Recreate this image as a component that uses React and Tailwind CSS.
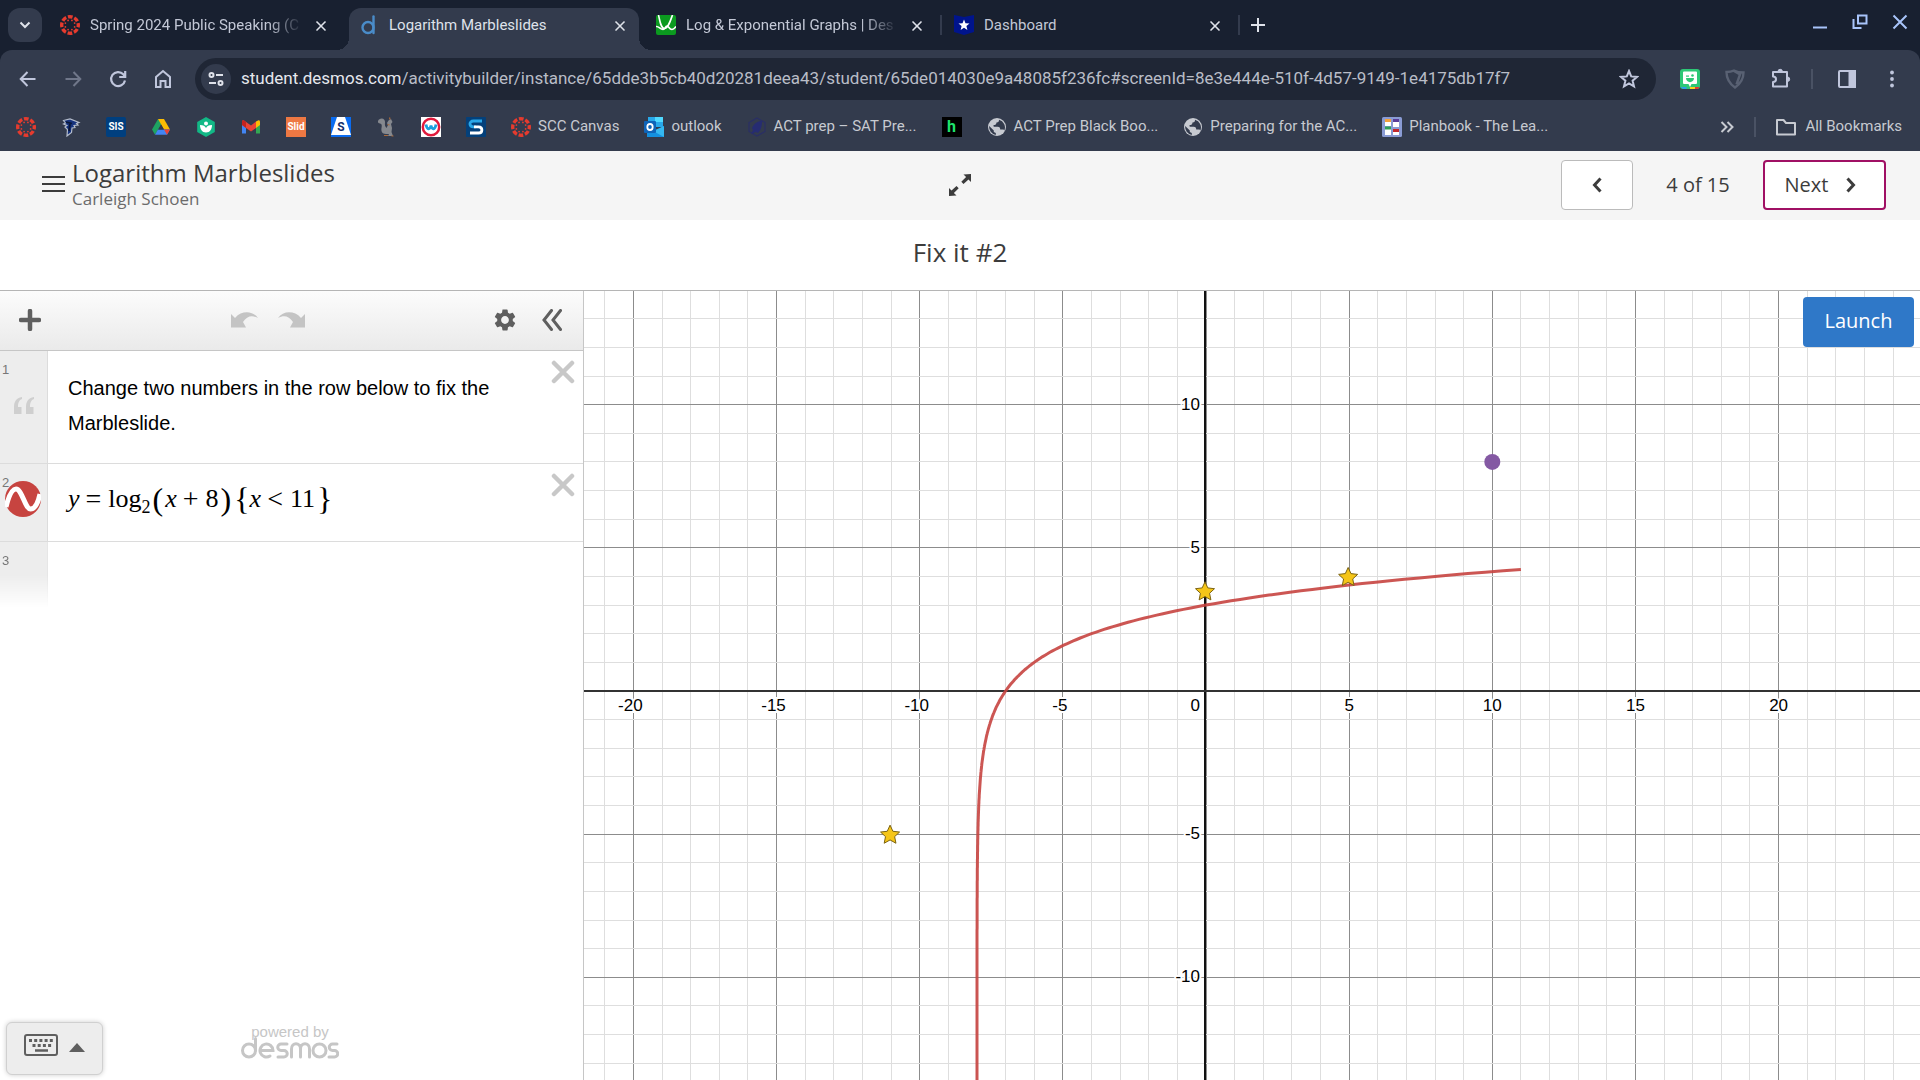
import React from "react";
import { FiX } from "react-icons/fi";
import { MdSettings } from "react-icons/md";

const UNIT = 28.63;
const ORIGIN = { x: 622, y: 400 };
const CURVE_COLOR = "#c74440";

const px = x => ORIGIN.x + x * UNIT;
const py = y => ORIGIN.y - y * UNIT;

const range = (from, to) => Array.from({ length: to - from + 1 }, (_, i) => from + i);

/* ---------- small drawings ---------- */

function CanvasIcon() {
  return (
    <svg viewBox="0 0 20 20" className="size-5 shrink-0" aria-hidden="true">
      <circle cx="10" cy="10" r="8.3" fill="none" stroke="#e63b2e" strokeWidth="3.400" strokeDasharray="4.700 1.819" strokeDashoffset="2.350" />
      {range(0, 7).map(i => {
        const a = (i * Math.PI) / 4 + Math.PI / 8;
        return <circle key={i} cx={10 + 5 * Math.cos(a)} cy={10 + 5 * Math.sin(a)} r="0.9" fill="#e63b2e" />;
      })}
    </svg>
  );
}

function DesmosIcon() {
  return (
    <svg viewBox="0 0 20 20" className="size-5 shrink-0" fill="none" stroke="#4a8cc9" strokeWidth="2.4" strokeLinecap="round" aria-hidden="true">
      <circle cx="9" cy="12.5" r="5.5" />
      <path d="M14.500 1.5v16.5" />
    </svg>
  );
}

function DesmosGraphIcon() {
  return (
    <svg viewBox="0 0 20 20" className="size-5 shrink-0" aria-hidden="true">
      <rect width="20" height="20" rx="2" fill="#0b9a1f" />
      <path d="M2.500 0C4 7 5 13.500 8.500 13.500S14 7 16.500 0M0 11.500c3-.5 4 3 7 3 2.500 0 2-3.500 4-3.500s2 3.500 5 3.500c2 0 3-1.500 4-3" fill="none" stroke="#fff" strokeWidth="1.6" />
    </svg>
  );
}

function BadgeIcon() {
  return (
    <svg viewBox="0 0 20 20" className="size-5 shrink-0" aria-hidden="true">
      <path d="M0 0l10 2L20 0v17l-10 3-10-3z" fill="#00148c" />
      <path d="M10 4.500l1.500 3.800 4 .2-3.100 2.500 1 4L10 12.800 6.600 15l1-4L4.500 8.500l4-.2z" fill="#fff" />
    </svg>
  );
}

function FalconIcon() {
  return (
    <svg viewBox="0 0 20 20" className="size-5 shrink-0" aria-hidden="true">
      <path d="M2.500 3.500L9 2l9 3.500-2.500 1L17 8l-4 .5 1 2-3 .5-.5 4.500L6 19l.5-6.500L4 10l2-1.500L2.500 7l2-1z" fill="#16337d" stroke="#b4bccb" strokeWidth="1.200" />
      <path d="M5 5l6 1.500M9 7l-1 7" stroke="#0a1738" strokeWidth="1.800" />
    </svg>
  );
}

function TextIcon({ text, className }) {
  return (
    <span className={`flex size-5 shrink-0 items-center justify-center overflow-hidden font-bold leading-none ${className}`}>
      {text}
    </span>
  );
}

function DriveIcon() {
  return (
    <svg viewBox="0 0 20 20" className="size-5 shrink-0" aria-hidden="true">
      <path d="M7 2L1 12.500l3 5.200L10.500 7z" fill="#1ea362" />
      <path d="M7 2h6l6 10.500h-6z" fill="#fbbc04" />
      <path d="M4 17.700l3-5.200h12l-3 5.200z" fill="#4285f4" />
      <path d="M19 12.500h-6l3 5.200z" fill="#ea4335" />
      <path d="M10 7.500L7.200 12.500h5.700z" fill="#333b4d" />
    </svg>
  );
}

function HexLeafIcon() {
  return (
    <svg viewBox="0 0 20 20" className="size-5 shrink-0" aria-hidden="true">
      <path d="M10 0l8.800 5v10L10 20l-8.800-5V5z" fill="#12b886" />
      <circle cx="10" cy="6.500" r="2" fill="#fff" />
      <path d="M4 8c3.500 0 5 1 6 3 1-2 2.500-3 6-3 0 4-2 7.500-6 7.500S4 12 4 8z" fill="#fff" />
    </svg>
  );
}

function GmailIcon() {
  return (
    <svg viewBox="0 0 20 20" className="size-5 shrink-0" aria-hidden="true">
      <path d="M1 5v11.500h4V8z" fill="#4285f4" />
      <path d="M19 5v11.500h-4V8z" fill="#34a853" />
      <path d="M15 4.500l2-1c1-.5 2 0 2 1.500v3l-4 3z" fill="#fbbc04" />
      <path d="M1 8V5c0-1.500 1-2 2-1.500l7 5 5-4V11l-5 3.500L5 11z" fill="#ea4335" />
      <path d="M1 8V5c0-1.500 1-2 2-1.500l2 1.500v6z" fill="#c5221f" />
    </svg>
  );
}

function TriangleSIcon() {
  return (
    <svg viewBox="0 0 20 20" className="size-5 shrink-0" aria-hidden="true">
      <rect width="20" height="20" fill="#0b6cf0" />
      <path d="M6 0h8l6 18H0z" fill="#fff" />
      <text x="10" y="14" textAnchor="middle" fontSize="12" fontWeight="700" fill="#14306e" fontFamily="Roboto, sans-serif">S</text>
    </svg>
  );
}

function SquirrelIcon() {
  return (
    <svg viewBox="0 0 20 20" className="size-5 shrink-0" aria-hidden="true">
      <path d="M3 2.500C6 0 9.500 2 9 5.500 8.700 8 9 9.500 10.500 11L12 8l-1-2 1.500-2.500L15 2l1.500 3L15 7l1 4-.5 4 1.500 4h-5l1-2-3 0C6 17 5 14 5.500 11 6 8.500 6 7 4 6.500 1.500 6 1.500 4 3 2.500z" fill="#85888e" />
      <path d="M13.500 0.500l.5 2M11.500 7.500l2 .5M8 18.500h4M15.500 19h2" stroke="#a8693a" strokeWidth="1.200" />
    </svg>
  );
}

function OwlIcon() {
  return (
    <svg viewBox="0 0 20 20" className="size-5 shrink-0" aria-hidden="true">
      <rect width="20" height="20" fill="#fff" />
      <circle cx="10" cy="10" r="8.200" fill="#fff" stroke="#e01a3c" strokeWidth="2.500" />
      <path d="M5 7.500c1 5.500 4 5.500 5 1 1 4.500 4 4.500 5-1" fill="none" stroke="#1aa0dc" strokeWidth="2.800" />
    </svg>
  );
}

function WaveSIcon() {
  return (
    <svg viewBox="0 0 20 20" className="size-5 shrink-0" aria-hidden="true">
      <rect width="20" height="20" rx="1" fill="#04407a" />
      <path d="M16 4H7.500C2.500 4 3 9.800 7.500 9.800H10" fill="none" stroke="#2aa7e8" strokeWidth="2.800" />
      <path d="M8 9.800h4.500c4.500 0 4.500 6.200 0 6.200H4" fill="none" stroke="#fff" strokeWidth="2.800" />
    </svg>
  );
}

function OutlookIcon() {
  return (
    <svg viewBox="0 0 20 20" className="size-5 shrink-0" aria-hidden="true">
      <path d="M4 0h15v10H4z" fill="#28a8ea" />
      <path d="M11 0h8v5h-8z" fill="#50d9ff" />
      <path d="M3 9l9 5 8-5v11H3z" fill="#1490df" />
      <path d="M20 9v11L9 14z" fill="#35b8f1" />
      <rect x="0" y="4" width="12" height="12" rx="1" fill="#0f64b8" />
      <ellipse cx="6" cy="10" rx="2.700" ry="3" fill="none" stroke="#fff" strokeWidth="1.800" />
    </svg>
  );
}

function RocketHexIcon() {
  return (
    <svg viewBox="0 0 20 20" className="size-5 shrink-0" aria-hidden="true">
      <path d="M10 1l8 4.500v9L10 19l-8-4.500v-9z" fill="none" stroke="#2a2f66" strokeWidth="1.200" />
      <path d="M15 4c-5 0-8 3-10 7l1 2-2 4 5-2 2 1c3-3 4-7 4-12z" fill="#262c72" />
    </svg>
  );
}

function GlobeIcon() {
  return (
    <svg viewBox="0 0 20 20" className="size-5 shrink-0" aria-hidden="true">
      <circle cx="10" cy="10" r="9" fill="#c7cad1" />
      <path d="M12 2.800c0 2-.5 2.400-2.500 2.600-.3 2-.8 2.400-3 2.600l.2 1.800h4c2 .2 2.500 1.200 2.500 2.700h2.500c1 0 1.400.6 1.600 1.200A8 8 0 0 0 12 2.800zM2.200 9l4.600 4.500v1.500l2 1v1.900A8 8 0 0 1 2.200 9z" fill="#333b4d" />
    </svg>
  );
}

function PlanbookIcon() {
  return (
    <svg viewBox="0 0 20 20" className="size-5 shrink-0" aria-hidden="true">
      <rect width="20" height="20" rx="1.500" fill="#8a9bd4" />
      <g fill="#fff">
        <rect x="3" y="3" width="6" height="6" />
        <rect x="11" y="3" width="6" height="7" />
        <rect x="3" y="11" width="6" height="7" />
        <rect x="11" y="12" width="6" height="6" />
      </g>
      <path d="M3 2h6v3H3z" fill="#f2a13c" />
      <path d="M11 2h6v3h-6z" fill="#5a3c99" />
      <path d="M3 9.500h6v3H3z" fill="#2f9e55" />
      <path d="M11 12h6v3h-6z" fill="#c3272b" />
    </svg>
  );
}

/* ---------- browser chrome ---------- */

const TABS = [
  { title: "Spring 2024 Public Speaking (C", icon: <CanvasIcon />, fade: true },
  { title: "Logarithm Marbleslides", icon: <DesmosIcon />, active: true },
  { title: "Log & Exponential Graphs | Des", icon: <DesmosGraphIcon />, fade: true },
  { title: "Dashboard", icon: <BadgeIcon /> },
];

function Tab({ tab, last }) {
  return (
    <div
      className={`relative flex h-full items-center ${
        tab.active
          ? "mx-1 w-[290px] rounded-t-xl bg-[#333b4d] pr-[11px] pl-[10px] before:absolute before:bottom-0 before:-left-3 before:size-3 before:bg-[radial-gradient(circle_at_0_0,transparent_12px,#333b4d_12px)] after:absolute after:-right-3 after:bottom-0 after:size-3 after:bg-[radial-gradient(circle_at_100%_0,transparent_12px,#333b4d_12px)]"
          : "w-[298px] pr-4 pl-[13px]"
      }`}
    >
      <div className="flex min-w-0 flex-1 items-center gap-[10px] pb-2">
        {tab.icon}
        <span
          className={`text-[15px] whitespace-nowrap ${tab.active ? "text-[#dfe2ea]" : "text-[#c3c8d6]"} ${
            tab.fade ? "[mask-image:linear-gradient(to_right,black_85%,transparent_102%)]" : ""
          }`}
        >
          {tab.title}
        </span>
      </div>
      <button aria-label={`Close ${tab.title}`} className="mb-[6px] text-[#dfe2ea]">
        <FiX className="size-4" strokeWidth="2.500" />
      </button>
      {last && <span className="absolute top-[7px] right-[-1px] h-5 w-[2px] bg-[#333b4d]" />}
    </div>
  );
}

function TabBar() {
  return (
    <div className="flex h-[50px] items-start pl-2">
      <button aria-label="Search tabs" className="mt-2 flex h-[34px] w-[34px] items-center justify-center rounded-xl bg-[#333b4d] text-[#dfe2ea]">
        <svg viewBox="0 0 12 12" className="size-3" fill="none" stroke="currentColor" strokeWidth="2"><path d="M1.500 3.500L6 8l4.500-4.500" /></svg>
      </button>
      <div className="flex h-full pt-2 pl-[5px]">
        {TABS.map((t, i) => <Tab key={t.title} tab={t} last={i > 1} />)}
      </div>
      <button aria-label="New tab" className="mt-[18px] ml-3 text-[#dfe2ea]">
        <svg viewBox="0 0 14 14" className="size-[14px]" stroke="currentColor" strokeWidth="2"><path d="M7 0v14M0 7h14" /></svg>
      </button>
      <div className="ml-auto flex gap-6 pt-[14px] pr-3 text-[#a8c4fa]">
        <button aria-label="Minimize">
          <svg viewBox="0 0 16 16" className="size-4" stroke="currentColor" strokeWidth="2"><path d="M1 13.500h14" /></svg>
        </button>
        <button aria-label="Restore">
          <svg viewBox="0 0 16 16" className="size-4" fill="none" stroke="currentColor" strokeWidth="2"><path d="M6 1.500h8.500v8H6zM1.500 5v9h8" /></svg>
        </button>
        <button aria-label="Close window">
          <svg viewBox="0 0 16 16" className="size-4" stroke="currentColor" strokeWidth="2"><path d="M1.500 1.500l13 13M14.500 1.500l-13 13" /></svg>
        </button>
      </div>
    </div>
  );
}

function AddressBar() {
  return (
    <div className="flex h-[58px] items-center px-[18px] text-[#c0c6dc]">
      <div className="flex items-center gap-[25px]">
        <button aria-label="Back">
          <svg viewBox="0 0 20 20" className="size-5" fill="none" stroke="currentColor" strokeWidth="2"><path d="M17.500 10H3M9.500 3L2.700 10l6.800 7" /></svg>
        </button>
        <button aria-label="Forward" className="text-[#70778a]">
          <svg viewBox="0 0 20 20" className="size-5" fill="none" stroke="currentColor" strokeWidth="2"><path d="M2.500 10H17M10.500 3l6.800 7-6.800 7" /></svg>
        </button>
        <button aria-label="Reload">
          <svg viewBox="0 0 20 20" className="size-5" fill="none" stroke="currentColor" strokeWidth="2.200"><path d="M17 11.500A7 7 0 1 1 15.300 5.300L17 7.500M17.200 2v6h-6" /></svg>
        </button>
        <button aria-label="Home">
          <svg viewBox="0 0 20 20" className="size-5" fill="none" stroke="currentColor" strokeWidth="2"><path d="M3 8l7-6 7 6v10h-4.500v-6h-5v6H3z" /></svg>
        </button>
      </div>
      <div className="ml-[22px] flex h-[42px] min-w-0 flex-1 items-center rounded-full bg-[#1f2635] pr-[17px] pl-[6px]">
        <button aria-label="View site information" className="flex size-[30px] shrink-0 items-center justify-center rounded-full bg-[#333b4d] text-[#dfe2ea]">
          <svg viewBox="0 0 16 16" className="size-4" fill="none" stroke="currentColor" strokeWidth="2"><circle cx="3.500" cy="4" r="2" /><path d="M8 4h7M1 12h7" /><circle cx="12.500" cy="12" r="2" /></svg>
        </button>
        <div className="ml-[10px] flex-1 overflow-hidden text-[17px] whitespace-nowrap text-[#b9bdc7]">
          <span className="text-[#e6e8ee]">student.desmos.com</span>
          /activitybuilder/instance/65dde3b5cb40d20281deea43/student/65de014030e9a48085f236fc#screenId=8e3e444e-510f-4d57-9149-1e4175db17f7
        </div>
        <button aria-label="Bookmark this tab">
          <svg viewBox="0 0 20 20" className="size-5" fill="none" stroke="currentColor" strokeWidth="2"><path d="M10 2l2.200 5.400 5.800.5-4.400 3.800 1.400 5.700L10 14.400 5 17.400l1.400-5.700L2 7.900l5.800-.5z" /></svg>
        </button>
      </div>
      <div className="ml-6 flex items-center gap-[25px]">
        <button aria-label="Bitmoji">
          <svg viewBox="0 0 20 20" className="size-5">
            <rect width="20" height="20" rx="3" fill="#2dc776" />
            <path d="M0.500 18h6v2H3z" fill="#2b9de9" /><path d="M10 18h5v2h-5z" fill="#f6d320" /><path d="M15 18h4.500L18 20h-3z" fill="#e8352e" />
            <path d="M4 2.500h12a1 1 0 0 1 1 1V14a1 1 0 0 1-1 1h-4.500L10 18l-1.500-3H4a1 1 0 0 1-1-1V3.500a1 1 0 0 1 1-1z" fill="#fff" />
            <path d="M6 6.500h3v1.200H6z" fill="#2dc776" /><circle cx="12.500" cy="6.500" r="1.300" fill="#2dc776" /><path d="M6 9h8c0 5.500-8 5.500-8 0z" fill="#2dc776" />
          </svg>
        </button>
        <button aria-label="Shield extension" className="text-[#596173]">
          <svg viewBox="0 0 20 20" className="size-5" fill="none" stroke="currentColor" strokeWidth="2.400"><path d="M1.500 3C4 3 7 2.500 9 1.500c3 1.500 6 2 9.500 2C18.500 10 15 15 10 18.500 5 15 1.500 9.500 1.500 3zM9 2l6 3.500-3.500 10" /></svg>
        </button>
        <button aria-label="Extensions">
          <svg viewBox="0 0 22 22" className="size-[22px]" fill="none" stroke="currentColor" strokeWidth="2"><path d="M3 4h14v14.500H3V14c4 0 4-5.500 0-5.500z" strokeLinejoin="round" /><path d="M8 3.500a2.200 2.200 0 0 1 4.400 0zM17.500 9a2.200 2.200 0 0 1 0 4.400z" fill="currentColor" stroke="currentColor" strokeWidth="1" /></svg>
        </button>
      </div>
      <span className="mr-6 ml-[19px] h-5 w-[2px] bg-[#4a5264]" />
      <div className="flex items-center gap-[25px]">
        <button aria-label="Side panel">
          <svg viewBox="0 0 20 20" className="size-5" fill="none" stroke="currentColor" strokeWidth="2"><rect x="2" y="2" width="16" height="16" rx="1" /><path d="M12.500 2H18v16h-5.500z" fill="currentColor" /></svg>
        </button>
        <button aria-label="Menu">
          <svg viewBox="0 0 20 20" className="size-5" fill="currentColor"><circle cx="10" cy="3.500" r="1.900" /><circle cx="10" cy="10" r="1.900" /><circle cx="10" cy="16.500" r="1.900" /></svg>
        </button>
      </div>
    </div>
  );
}

const ICON_BOOKMARKS = [
  { name: "Canvas", icon: <CanvasIcon /> },
  { name: "Falcons", icon: <FalconIcon /> },
  { name: "SIS", icon: <TextIcon text="SIS" className="rounded-xs bg-[#003f7f] text-[10px] text-white" /> },
  { name: "Drive", icon: <DriveIcon /> },
  { name: "Hapara", icon: <HexLeafIcon /> },
  { name: "Gmail", icon: <GmailIcon /> },
  { name: "Slides", icon: <TextIcon text="Slid" className="bg-[#ee7843] text-[10px] text-white" /> },
  { name: "Skyward", icon: <TriangleSIcon /> },
  { name: "Squirrel", icon: <SquirrelIcon /> },
  { name: "Owl", icon: <OwlIcon /> },
  { name: "Schoology", icon: <WaveSIcon /> },
];

const BOOKMARKS = [
  { title: "SCC Canvas", icon: <CanvasIcon /> },
  { title: "outlook", icon: <OutlookIcon /> },
  { title: "ACT prep – SAT Pre...", icon: <RocketHexIcon /> },
  { title: "", icon: <TextIcon text="h" className="bg-black text-[16px] text-[#1fe26c]" /> },
  { title: "ACT Prep Black Boo...", icon: <GlobeIcon /> },
  { title: "Preparing for the AC...", icon: <GlobeIcon /> },
  { title: "Planbook - The Lea...", icon: <PlanbookIcon /> },
];

function BookmarksBar() {
  return (
    <div className="flex h-[43px] items-center px-4 pb-[6px] text-[15px] text-[#c7cad1]">
      <div className="flex items-center gap-[25px]">
        {ICON_BOOKMARKS.map(b => (
          <a key={b.name} href="#" aria-label={b.name}>{b.icon}</a>
        ))}
        {BOOKMARKS.map((b, i) => (
          <a key={i} href="#" aria-label={b.title || "Bookmark"} className="flex items-center gap-[7px] whitespace-nowrap">
            {b.icon}
            {b.title && <span>{b.title}</span>}
          </a>
        ))}
      </div>
      <button aria-label="More bookmarks" className="ml-auto">
        <svg viewBox="0 0 14 14" className="size-[14px]" fill="none" stroke="currentColor" strokeWidth="2"><path d="M1.500 2l5 5-5 5M7.500 2l5 5-5 5" /></svg>
      </button>
      <span className="mx-5 h-5 w-[2px] bg-[#4a5264]" />
      <a href="#" className="flex items-center gap-[9px] pr-[2px]">
        <svg viewBox="0 0 20 20" className="size-5" fill="none" stroke="currentColor" strokeWidth="2"><path d="M1 3h6.500l2.500 3h9v11.500H1z" strokeLinejoin="round" /></svg>
        All Bookmarks
      </a>
    </div>
  );
}

/* ---------- activity ---------- */

function ActivityHeader() {
  return (
    <header className="grid h-[69px] grid-cols-[1fr_auto_1fr] items-center bg-[#f5f5f5] px-[34px] pb-[2px] text-[#3c3c3c]">
      <div className="flex items-center gap-[7px] pl-2">
        <button aria-label="Menu" className="pb-[2px]">
          <svg viewBox="0 0 23 16" className="h-4 w-[23px]" stroke="currentColor" strokeWidth="2"><path d="M0 1h23M0 8h23M0 15h23" /></svg>
        </button>
        <div>
          <h1 className="text-[24px] leading-7">Logarithm Marbleslides</h1>
          <div className="text-[17px] leading-6 text-[#6b6b6b]">Carleigh Schoen</div>
        </div>
      </div>
      <button aria-label="Full screen">
        <svg viewBox="0 0 22 22" className="size-[22px]" fill="currentColor"><path d="M22 0v8l-2.500-2.500-5 4.500-2.200-2.200 4.800-4.800L14.500 0.500zM0 22v-8l2.500 2.500 5-4.500 2.200 2.200L4.900 19l2.600 2.500z" /></svg>
      </button>
      <div className="flex items-center justify-end text-[20px]">
        <button aria-label="Previous" className="flex h-[50px] w-[72px] items-center justify-center rounded-sm border border-[#bbb] bg-white">
          <svg viewBox="0 0 10 16" className="h-4 w-[10px]" fill="none" stroke="currentColor" strokeWidth="3"><path d="M8.500 1.500L2.500 8l6 6.500" /></svg>
        </button>
        <span className="w-[130px] text-center">4 of 15</span>
        <button className="flex h-[50px] w-[123px] items-center justify-center gap-[18px] rounded-sm border-2 border-[#a01064] bg-white pr-2">
          Next
          <svg viewBox="0 0 10 16" className="h-4 w-[10px]" fill="none" stroke="currentColor" strokeWidth="3"><path d="M1.500 1.500l6 6.500-6 6.500" /></svg>
        </button>
      </div>
    </header>
  );
}

function DeleteButton() {
  return (
    <button aria-label="Delete row" className="mt-[9px] mr-2 self-start text-[#c8c8c8]">
      <svg viewBox="0 0 24 24" className="size-6" stroke="currentColor" strokeWidth="4.500" strokeLinecap="round"><path d="M3 3l18 18M21 3L3 21" /></svg>
    </button>
  );
}

function PanelToolbar() {
  return (
    <div className="grid h-[60px] grid-cols-[1fr_auto_1fr] items-center border-b border-[#c6c6c6] bg-linear-to-b from-[#fcfcfc] to-[#eaeaea] pr-[21px] pb-[2px] pl-[19px] text-[#5f5f5f]">
      <button aria-label="Add item" className="justify-self-start">
        <svg viewBox="0 0 22 22" className="size-[22px]" stroke="currentColor" strokeWidth="4.500" strokeLinecap="round"><path d="M11 2v18M2 11h18" /></svg>
      </button>
      <div className="flex gap-5 pr-[46px] text-[#c4c4c4]">
        <button aria-label="Undo">
          <svg viewBox="0 0 27 16" className="h-4 w-[27px]" fill="currentColor"><path d="M0 2l4 4c7-8 18-7 23 0-6-3-11-2-15 4l3 5.500H0z" /></svg>
        </button>
        <button aria-label="Redo">
          <svg viewBox="0 0 27 16" className="h-4 w-[27px]" fill="currentColor"><path d="M27 2l-4 4C16-2 5-1 0 6c6-3 11-2 15 4l-3 5.500h15z" /></svg>
        </button>
      </div>
      <div className="flex items-center gap-6 justify-self-end">
        <button aria-label="Settings"><MdSettings className="size-[26px]" /></button>
        <button aria-label="Hide list">
          <svg viewBox="0 0 20 22" className="h-[22px] w-5" fill="none" stroke="currentColor" strokeWidth="3" strokeLinecap="round"><path d="M9.500 1.500L2 11l7.500 9.500M18.500 1.500L11 11l7.500 9.500" /></svg>
        </button>
      </div>
    </div>
  );
}

function ExpressionPanel() {
  return (
    <aside className="flex w-[584px] shrink-0 flex-col border-r border-[#c6c6c6] bg-white font-['Liberation_Sans',sans-serif]">
      <PanelToolbar />
      <div className="flex h-[113px] border-b border-[#dcdcdc]">
        <div className="w-12 shrink-0 border-r border-[#dcdcdc] bg-[#ededed] pt-[11px] pl-[2px] text-[13px] leading-4 text-[#777]">
          1
          <svg viewBox="0 0 20 17" className="mt-[19px] ml-3 h-[17px] w-5" fill="#cfcfcf"><path d="M8 0C2 1 0 5 0 10v7h7.500v-7H4C4 6 5 3 8 2zM20 0c-6 1-8 5-8 10v7h7.500v-7H16c0-4 1-7 4-8z" /></svg>
        </div>
        <p className="flex-1 pt-5 pl-5 text-[20px] leading-[35px] text-black">Change two numbers in the row below to fix the Marbleslide.</p>
        <DeleteButton />
      </div>
      <div className="flex h-[78px] border-b border-[#dcdcdc]">
        <div className="relative w-12 shrink-0 border-r border-[#dcdcdc] bg-[#ededed] pt-[11px] pl-[2px] text-[13px] leading-4 text-[#777]">
          2
          <button aria-label="Toggle graph" className="absolute top-[17px] left-[5px]">
            <svg viewBox="0 0 36 36" className="size-9"><circle cx="18" cy="18" r="18" fill={CURVE_COLOR} /><path d="M1 26C4 14 7 8 11 8c6 0 9 20 14.500 20C30 28 33 22 35 13" fill="none" stroke="#fff" strokeWidth="5" /></svg>
          </button>
        </div>
        <div className="flex flex-1 items-center pb-2 pl-5 font-['Liberation_Serif',serif] text-[26px] text-black">
          <i>y</i>
          <span className="mr-[7px] ml-[6px] text-[28px] leading-none">=</span>
          <span>log</span>
          <sub className="top-2 text-[18px] leading-none">2</sub>
          <span className="ml-[2px] text-[32px] leading-none">(</span>
          <i className="ml-[2px]">x</i>
          <span className="mr-[7px] ml-[6px] text-[28px] leading-none">+</span>
          <span>8</span>
          <span className="ml-[2px] text-[32px] leading-none">)</span>
          <span className="ml-[3px] text-[32px] leading-none">{"{"}</span>
          <i>x</i>
          <span className="mr-[7px] ml-[6px] text-[28px] leading-none">&lt;</span>
          <span>11</span>
          <span className="ml-[2px] text-[32px] leading-none">{"}"}</span>
        </div>
        <DeleteButton />
      </div>
      <div className="h-[66px] w-12 border-r border-[#e6e6e6] bg-[#ededed] [mask-image:linear-gradient(to_bottom,black_50%,transparent)] pt-[11px] pl-[2px] text-[13px] leading-4 text-[#777]">3</div>
      <div className="mt-auto grid grid-cols-[1fr_auto_1fr] items-end pr-[9px] pb-[5px] pl-[6px]">
        <button aria-label="Open keypad" className="flex h-[53px] w-[97px] items-center justify-center gap-[11px] rounded-md border border-[#d0d0d0] bg-[#ededed] pb-2 text-[#5f5f5f] shadow-[0_0_5px_rgba(0,0,0,0.2)]">
          <svg viewBox="0 0 34 22" className="h-[22px] w-[34px]" fill="none" stroke="currentColor" strokeWidth="2">
            <rect x="1" y="1" width="32" height="20" rx="2" />
            <path d="M5 6.500h25" strokeWidth="3" strokeDasharray="3 2.200" /><path d="M8.500 11.500h19" strokeWidth="3" strokeDasharray="3 2.200" /><path d="M11 16.500h13" strokeWidth="2.500" />
          </svg>
          <svg viewBox="0 0 16 9" className="mt-[6px] h-[9px] w-4" fill="currentColor"><path d="M8 0l8 9H0z" /></svg>
        </button>
        <div className="pb-4 text-[#c6c6c6]">
          <div className="text-center text-[15px] leading-4">powered by</div>
          <svg viewBox="0 0 98 22" className="-mt-[3px] h-[22px] w-[98px]" fill="none" stroke="currentColor" strokeWidth="3" strokeLinecap="round" role="img" aria-label="desmos">
            <circle cx="8" cy="13.500" r="6.500" /><path d="M14.500 1.500v12" />
            <path d="M19 13.500h13a6.500 6.500 0 1 0-3 5.500" />
            <path d="M46 7h-6a3 3 0 0 0 0 6.500h3a3 3 0 0 1 0 6.500h-6" />
            <path d="M50.500 20v-8c0-7 9-7 9 0v8M59.500 12c0-7 9-7 9 0v8" />
            <circle cx="78.500" cy="13.500" r="6.500" />
            <path d="M96 7h-4.500a3 3 0 0 0 0 6.500h2a3 3 0 0 1 0 6.500H88" />
          </svg>
        </div>
      </div>
    </aside>
  );
}

const STARS = [[0, 3.5], [5, 4], [-11, -5]];
const STAR_POINTS = range(0, 9)
  .map(i => {
    const r = i % 2 ? 4.8 : 10;
    const a = (i * Math.PI) / 5 - Math.PI / 2;
    return `${(r * Math.cos(a)).toFixed(2)},${(r * Math.sin(a)).toFixed(2)}`;
  })
  .join(" ");

// y = log2(x + 8), sampled along y so the steep part near x = -8 stays smooth
const CURVE = range(-280, 84)
  .map(i => i / 20)
  .concat(Math.log2(19))
  .map(y => `${px(2 ** y - 8).toFixed(1)},${py(y).toFixed(1)}`)
  .join(" ");

function Graph() {
  return (
    <div className="relative min-w-0 flex-1 overflow-hidden bg-white">
      <svg className="absolute inset-0 size-full font-['Liberation_Sans',sans-serif]" role="img" aria-label="Graph of the logarithm with stars">
        <g shapeRendering="crispEdges">
          {range(-21, 24).map(x => (
            <line key={`v${x}`} x1={px(x)} x2={px(x)} y1="0" y2="100%" stroke={x % 5 ? "#dedede" : "#8c8c8c"} />
          ))}
          {range(-13, 13).map(y => (
            <line key={`h${y}`} x1="0" x2="100%" y1={py(y)} y2={py(y)} stroke={y % 5 ? "#dedede" : "#8c8c8c"} />
          ))}
          <line x1="621" x2="621" y1="0" y2="100%" stroke="#111" strokeWidth="2" />
          <line x1="0" x2="100%" y1={py(0)} y2={py(0)} stroke="#333" strokeWidth="2" />
        </g>
        <g fontSize="17" fill="#000" stroke="#fff" strokeWidth="4" paintOrder="stroke">
          {[-20, -15, -10, -5, 5, 10, 15, 20].map(x => (
            <text key={x} x={px(x) - (x < 0 ? 3 : 0)} y={py(0) + 20} textAnchor="middle">{x}</text>
          ))}
          {[10, 5, -5, -10].map(y => (
            <text key={y} x={px(0) - 6} y={py(y) + 5} textAnchor="end">{y}</text>
          ))}
          <text x={px(0) - 6} y={py(0) + 20} textAnchor="end">0</text>
        </g>
        <polyline points={CURVE} fill="none" stroke={CURVE_COLOR} strokeOpacity="0.9" strokeWidth="3" />
        <circle cx={px(10)} cy={py(8)} r="8" fill="#8459a3" />
        {STARS.map(([x, y]) => (
          <polygon key={x} points={STAR_POINTS} transform={`translate(${px(x) - 1} ${py(y) + 1})`} fill="#f5c518" stroke="#7d6410" strokeWidth="1" strokeLinejoin="round" />
        ))}
      </svg>
      <button className="absolute top-[6px] right-[6px] h-[50px] w-[111px] rounded-sm bg-[#2f78c8] pb-[2px] text-[20px] text-white">Launch</button>
    </div>
  );
}

export default function App() {
  return (
    <div className="flex h-screen flex-col overflow-hidden bg-white font-[Roboto,sans-serif]">
      <div className="bg-[#182030]">
        <TabBar />
        <div className="rounded-t-xl bg-[#333b4d]">
          <AddressBar />
          <BookmarksBar />
        </div>
      </div>
      <div className="flex min-h-0 flex-1 flex-col font-['Open_Sans',sans-serif]">
        <ActivityHeader />
        <h2 className="flex h-[70px] items-center justify-center pb-[6px] text-[26px] text-[#3c3c3c]">Fix it #2</h2>
        <main className="flex min-h-0 flex-1 border-t border-[#b5b5b5]">
          <ExpressionPanel />
          <Graph />
        </main>
      </div>
    </div>
  );
}
